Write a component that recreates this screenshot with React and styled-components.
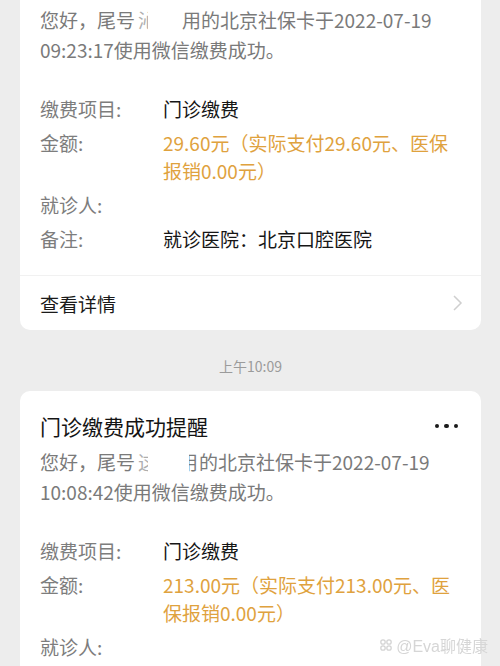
import styled, { createGlobalStyle } from "styled-components";

const GlobalStyle = createGlobalStyle`
  html, body {
    margin: 0;
    padding: 0;
    background: #ededed;
    overflow: hidden;
  }
  body {
    font-family: "Noto Sans CJK SC", "Noto Sans", sans-serif;
  }
`;

const records = [
  {
    hint: "沁",
    redactWidth: 47,
    clipped: false,
    time: "09:23:17",
    amount: ["29.60元（实际支付29.60元、医保", "报销0.00元）"],
    remark: "就诊医院：北京口腔医院",
    footer: true,
  },
  {
    hint: "这",
    redactWidth: 54,
    clipped: true,
    time: "10:08:42",
    amount: ["213.00元（实际支付213.00元、医", "保报销0.00元）"],
    remark: "",
    footer: false,
  },
];

const App = () => {
  return (
    <>
      <GlobalStyle />
      <Page>
        {records.map((r, i) => (
          <div key={i}>
            {i > 0 && <TimeLabel>上午10:09</TimeLabel>}
            <Card>
              <CardBody>
                <Title>
                  <span>门诊缴费成功提醒</span>
                  <More>
                    <i />
                    <i />
                    <i />
                  </More>
                </Title>
                <Message>
                  您好，尾号
                  <Redact $w={r.redactWidth}>
                    <Partial>{r.hint}</Partial>
                  </Redact>
                  {r.clipped ? (
                    <Tail>
                      <span>用</span>
                    </Tail>
                  ) : (
                    "用"
                  )}
                  的北京社保卡于2022-07-19
                  <br />
                  {r.time}使用微信缴费成功。
                </Message>
                <Rows>
                  <Row>
                    <Label>缴费项目:</Label>
                    <Value>门诊缴费</Value>
                  </Row>
                  <Row>
                    <Label>金额:</Label>
                    <Value $accent>
                      {r.amount[0]}
                      <br />
                      {r.amount[1]}
                    </Value>
                  </Row>
                  <Row>
                    <Label>就诊人:</Label>
                    <Value />
                  </Row>
                  <Row>
                    <Label>备注:</Label>
                    <Value>{r.remark}</Value>
                  </Row>
                </Rows>
              </CardBody>
              {r.footer && (
                <Footer>
                  <span>查看详情</span>
                  <svg width="12" height="18" viewBox="0 0 12 18">
                    <path d="M2 2 L9 9 L2 16" fill="none" stroke="#cfcfcf" strokeWidth="1.5" />
                  </svg>
                </Footer>
              )}
            </Card>
          </div>
        ))}
      </Page>
      <Watermark>
        <svg width="14" height="14" viewBox="0 0 14 14">
          <circle cx="4" cy="4" r="2.2" fill="none" stroke="#d4d4d4" strokeWidth="1.3" />
          <circle cx="10" cy="4" r="2.2" fill="none" stroke="#d4d4d4" strokeWidth="1.3" />
          <circle cx="4" cy="10" r="2.2" fill="none" stroke="#d4d4d4" strokeWidth="1.3" />
          <circle cx="10" cy="10" r="2.2" fill="none" stroke="#d4d4d4" strokeWidth="1.3" />
        </svg>
        @Eva聊健康
      </Watermark>
    </>
  );
};

const Page = styled.div`
  margin-top: -51px;
  padding: 0 19px 0 20px;
`;

const Card = styled.div`
  background: #ffffff;
  border-radius: 10px;
  overflow: hidden;
`;

const CardBody = styled.div`
  padding: 21px 20px 22px 20px;
`;

const Title = styled.div`
  display: flex;
  align-items: center;
  justify-content: space-between;
  font-size: 21px;
  line-height: 28px;
  color: #141414;
`;

const More = styled.div`
  display: flex;
  gap: 5px;
  margin-right: 3px;
  i {
    width: 4.5px;
    height: 4.5px;
    border-radius: 50%;
    background: #1a1a1a;
  }
`;

const Message = styled.div`
  margin-top: 7px;
  font-size: 19px;
  line-height: 30px;
  color: #7a7a7a;
  white-space: nowrap;
`;

const Redact = styled.span`
  display: inline-block;
  width: ${(p) => p.$w}px;
  vertical-align: top;
  white-space: nowrap;
`;

const Partial = styled.span`
  display: inline-block;
  width: 10px;
  overflow: hidden;
  margin-left: 3px;
  vertical-align: top;
  opacity: 0.6;
`;

const Tail = styled.span`
  display: inline-block;
  width: 8px;
  overflow: hidden;
  vertical-align: top;
  margin-right: 2px;
  span {
    display: inline-block;
    margin-left: -10px;
  }
`;

const Rows = styled.div`
  margin-top: 30px;
  display: flex;
  flex-direction: column;
  gap: 6px;
`;

const Row = styled.div`
  display: flex;
  font-size: 19px;
  line-height: 28px;
  min-height: 28px;
`;

const Label = styled.div`
  width: 123px;
  flex-shrink: 0;
  color: #7d7d7d;
`;

const Value = styled.div`
  flex: 1;
  white-space: nowrap;
  color: ${(p) => (p.$accent ? "#dfa23e" : "#161616")};
`;

const Footer = styled.div`
  height: 54px;
  border-top: 1px solid #f1f1f1;
  padding: 0 17px 0 20px;
  display: flex;
  align-items: center;
  justify-content: space-between;
  font-size: 19px;
  color: #1a1a1a;
`;

const TimeLabel = styled.div`
  height: 61px;
  padding-top: 11px;
  box-sizing: border-box;
  display: flex;
  align-items: center;
  justify-content: center;
  font-size: 14px;
  color: #9b9b9b;
`;

const Watermark = styled.div`
  position: fixed;
  right: 12px;
  bottom: 9px;
  display: flex;
  align-items: center;
  gap: 3px;
  font-size: 16px;
  color: #d6d6d6;
  font-family: "Liberation Sans", "Noto Sans CJK SC", sans-serif;
`;

export default App;
